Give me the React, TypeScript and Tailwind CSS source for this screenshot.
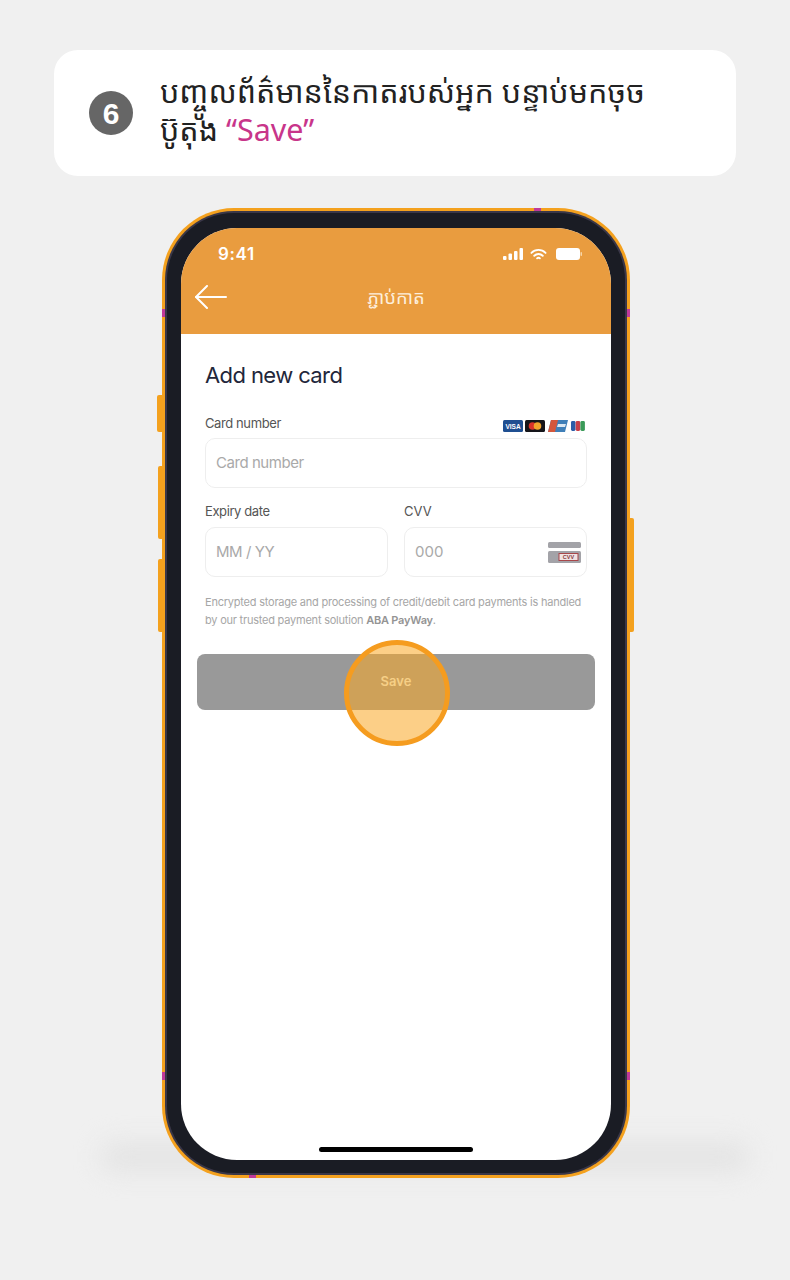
const PINK = "absolute bg-[#c0399a]";

function CardLogos() {
  return (
    <div className="flex items-center gap-[2.5px]">
      <svg width="20" height="12" viewBox="0 0 20 12"><rect width="20" height="12" rx="1.5" fill="#1f4f91" /><text x="10" y="8.5" fontSize="6.5" fontWeight="700" fill="#fff" textAnchor="middle" fontFamily="Liberation Sans, sans-serif">VISA</text></svg>
      <svg width="20" height="12" viewBox="0 0 20 12"><rect width="20" height="12" rx="1.5" fill="#15151a" /><circle cx="7.5" cy="6" r="3.8" fill="#d8322a" /><circle cx="12.5" cy="6" r="3.8" fill="#f2a32c" /></svg>
      <svg width="20" height="12" viewBox="0 0 20 12"><path d="M3 0h17l-3 12H0z" fill="#3f7fb8" /><path d="M3 0h7L7 12H0z" fill="#d4573c" /><path d="M10 4h8l-1 3H9z" fill="#dce8f2" /></svg>
      <svg width="16" height="12" viewBox="0 0 16 12"><rect x="1" y="1" width="4.5" height="10" rx="1.4" fill="#2c5da8" /><rect x="5.7" y="1" width="4.5" height="10" rx="1.4" fill="#c8404a" /><rect x="10.4" y="1" width="4.5" height="10" rx="1.4" fill="#3a9a58" /></svg>
    </div>
  );
}

function Field({ placeholder, className, right }: { placeholder: string; className?: string; right?: React.ReactNode }) {
  return (
    <div className={`flex h-[50px] items-center justify-between rounded-[10px] border border-[#eeeeee] bg-white pl-[10px] pr-[5px] text-[15px] tracking-[-0.45px] text-[#a9a9a9] ${className ?? ""}`}>
      <span>{placeholder}</span>
      {right}
    </div>
  );
}

export default function App() {
  return (
    <div className="isolate flex h-[1280px] w-[790px] flex-col items-center overflow-hidden bg-[#f0f0f0] pt-[50px] font-['Inter',sans-serif]">
      <div className="flex h-[126px] w-[682px] shrink-0 items-center gap-[27px] rounded-[24px] bg-white pl-[35px] font-['Noto_Sans','Noto_Sans_Khmer','Khmer_OS',sans-serif]">
        <div className="flex h-[44px] w-[44px] shrink-0 items-center justify-center rounded-full bg-[#666666] font-['Liberation_Sans',sans-serif] text-[30px] font-bold text-white">6</div>
        <p className="-mt-[6px] w-[510px] text-[30.5px] leading-[38px] text-[#222222]">
          បញ្ចូលព័ត៌មាននៃកាតរបស់អ្នក បន្ទាប់មកចុច ប៊ូតុង <span className="text-[#c8358a]">“Save”</span>
        </p>
      </div>

      <div className="relative ml-[2px] mt-[32px] h-[970px] w-[468px] shrink-0 rounded-[72px] bg-[#f4a11e] p-[3px]">
        <div className="absolute bottom-[6px] left-[-62px] -z-10 h-[30px] w-[650px] rounded-full bg-[#e4e4e4] blur-[12px]" />
        <div className="absolute left-[-5px] top-[187px] h-[37px] w-[5px] rounded-l-[2px] bg-[#f4a11e]" />
        <div className="absolute left-[-4px] top-[258px] h-[73px] w-[4px] rounded-l-[2px] bg-[#f4a11e]" />
        <div className="absolute left-[-4px] top-[351px] h-[73px] w-[4px] rounded-l-[2px] bg-[#f4a11e]" />
        <div className="absolute right-[-4px] top-[310px] h-[114px] w-[4px] rounded-r-[2px] bg-[#f4a11e]" />
        <div className={`${PINK} left-[372px] top-0 h-[4px] w-[7px]`} />
        <div className={`${PINK} left-0 top-[101px] h-[8px] w-[3px]`} />
        <div className={`${PINK} right-0 top-[101px] h-[8px] w-[3px]`} />
        <div className={`${PINK} left-0 top-[864px] h-[8px] w-[3px]`} />
        <div className={`${PINK} right-0 top-[864px] h-[8px] w-[3px]`} />
        <div className={`${PINK} bottom-0 left-[87px] h-[4px] w-[7px]`} />

        <div className="relative h-full w-full rounded-[69px] bg-[#3a3748] p-[2px]">
          <div className="h-full w-full rounded-[67px] bg-[#1a1c24] px-[14px] pb-[13px] pt-[15px]">
            <div className="relative flex h-[932px] w-[430px] flex-col overflow-hidden rounded-[56px] bg-white">
              <header className="h-[106px] shrink-0 bg-[#e99c3f] text-white">
                <div className="flex h-[52px] items-center justify-between pl-[37px] pr-[29px]">
                  <span className="text-[17px] font-semibold leading-[20px] tracking-[0.6px]">9:41</span>
                  <div className="flex items-center">
                    <svg width="20" height="12" viewBox="0 0 20 12" fill="#fff"><rect x="0" y="8" width="3.5" height="4" rx="1" /><rect x="5.5" y="5.5" width="3.5" height="6.5" rx="1" /><rect x="11" y="3" width="3.5" height="9" rx="1" /><rect x="16.5" y="0" width="3.5" height="12" rx="1" /></svg>
                    <svg className="ml-[7px]" width="17" height="13" viewBox="0 0 18 13" fill="none" stroke="#fff" strokeWidth="2" strokeLinecap="round"><path d="M1.5 4.8a10.5 10.5 0 0 1 15 0" /><path d="M4.5 7.8a6.3 6.3 0 0 1 9 0" /><path d="M7.5 10.6a2 2 0 0 1 3 0" /></svg>
                    <svg className="ml-[9px]" width="26" height="12" viewBox="0 0 26 12"><rect x="0" y="0" width="24" height="12" rx="3" fill="#fff" /><rect x="24.5" y="4" width="1.5" height="4" rx="0.7" fill="#f7d6a8" /></svg>
                  </div>
                </div>
                <div className="relative flex h-[34px] items-center justify-center">
                  <svg className="absolute left-[14px] top-[5px]" width="32" height="24" viewBox="0 0 32 24" fill="none" stroke="#fff" strokeWidth="2" strokeLinecap="round" strokeLinejoin="round"><path d="M1 12h30" /><path d="M12 1 1 12l11 11" /></svg>
                  <span className="-mt-[1px] font-['Noto_Sans','Noto_Sans_Khmer',sans-serif] text-[18.5px] text-[#fdeedb]">ភ្ជាប់កាត</span>
                </div>
              </header>

              <main className="flex flex-1 flex-col px-[24px] pt-[26px]">
                <h1 className="text-[22px] font-normal leading-[30px] tracking-[-0.6px] text-[#22263a]">Add new card</h1>
                <div className="mt-[22px] flex h-[24px] items-center justify-between pr-[1px]">
                  <span className="text-[13px] tracking-[-0.4px] text-[#555555]">Card number</span>
                  <div className="mt-[4px]"><CardLogos /></div>
                </div>
                <Field placeholder="Card number" className="mt-[2px]" />
                <div className="mt-[11px] grid grid-cols-2 gap-[16px]">
                  <div>
                    <div className="text-[13px] leading-[24px] tracking-[-0.4px] text-[#555555]">Expiry date</div>
                    <Field placeholder="MM / YY" className="mt-[4px]" />
                  </div>
                  <div>
                    <div className="text-[13px] leading-[24px] text-[#555555]">CVV</div>
                    <Field
                      placeholder="000"
                      className="mt-[4px] tracking-normal"
                      right={
                        <svg width="33" height="21" viewBox="0 0 33 21"><rect width="33" height="6" rx="1.5" fill="#a3a3a8" /><rect y="9" width="33" height="12" rx="1.5" fill="#a3a3a8" /><rect x="11" y="11.5" width="19" height="7" fill="#f0e2e2" stroke="#a8474a" strokeWidth="1" /><text x="20.5" y="17" fontSize="5.5" fontWeight="700" fill="#8a3a3d" textAnchor="middle" fontFamily="Liberation Sans, sans-serif">CVV</text></svg>
                      }
                    />
                  </div>
                </div>
                <p className="mt-[16px] text-[11px] leading-[18px] tracking-[-0.22px] text-[#a6a6a6]">
                  Encrypted storage and processing of credit/debit card payments is handled by our trusted payment solution <b className="font-semibold text-[#949494]">ABA PayWay</b>.
                </p>
                <div className="relative -mx-[8px] mt-[25px] flex h-[56px] items-center justify-center rounded-[8px] bg-[#999999] text-[13px] font-semibold text-[#f6cf86]">
                  <span className="relative z-10 -mt-[1px]">Save</span>
                  <div className="absolute left-[147px] top-[-14px] h-[106px] w-[106px] rounded-full border-[5px] border-[#f59c1f] bg-[#f9a825]/55" />
                </div>
              </main>
              <div className="absolute bottom-[8px] left-[138px] h-[5px] w-[154px] rounded-full bg-black" />
            </div>
          </div>
        </div>
      </div>
    </div>
  );
}
